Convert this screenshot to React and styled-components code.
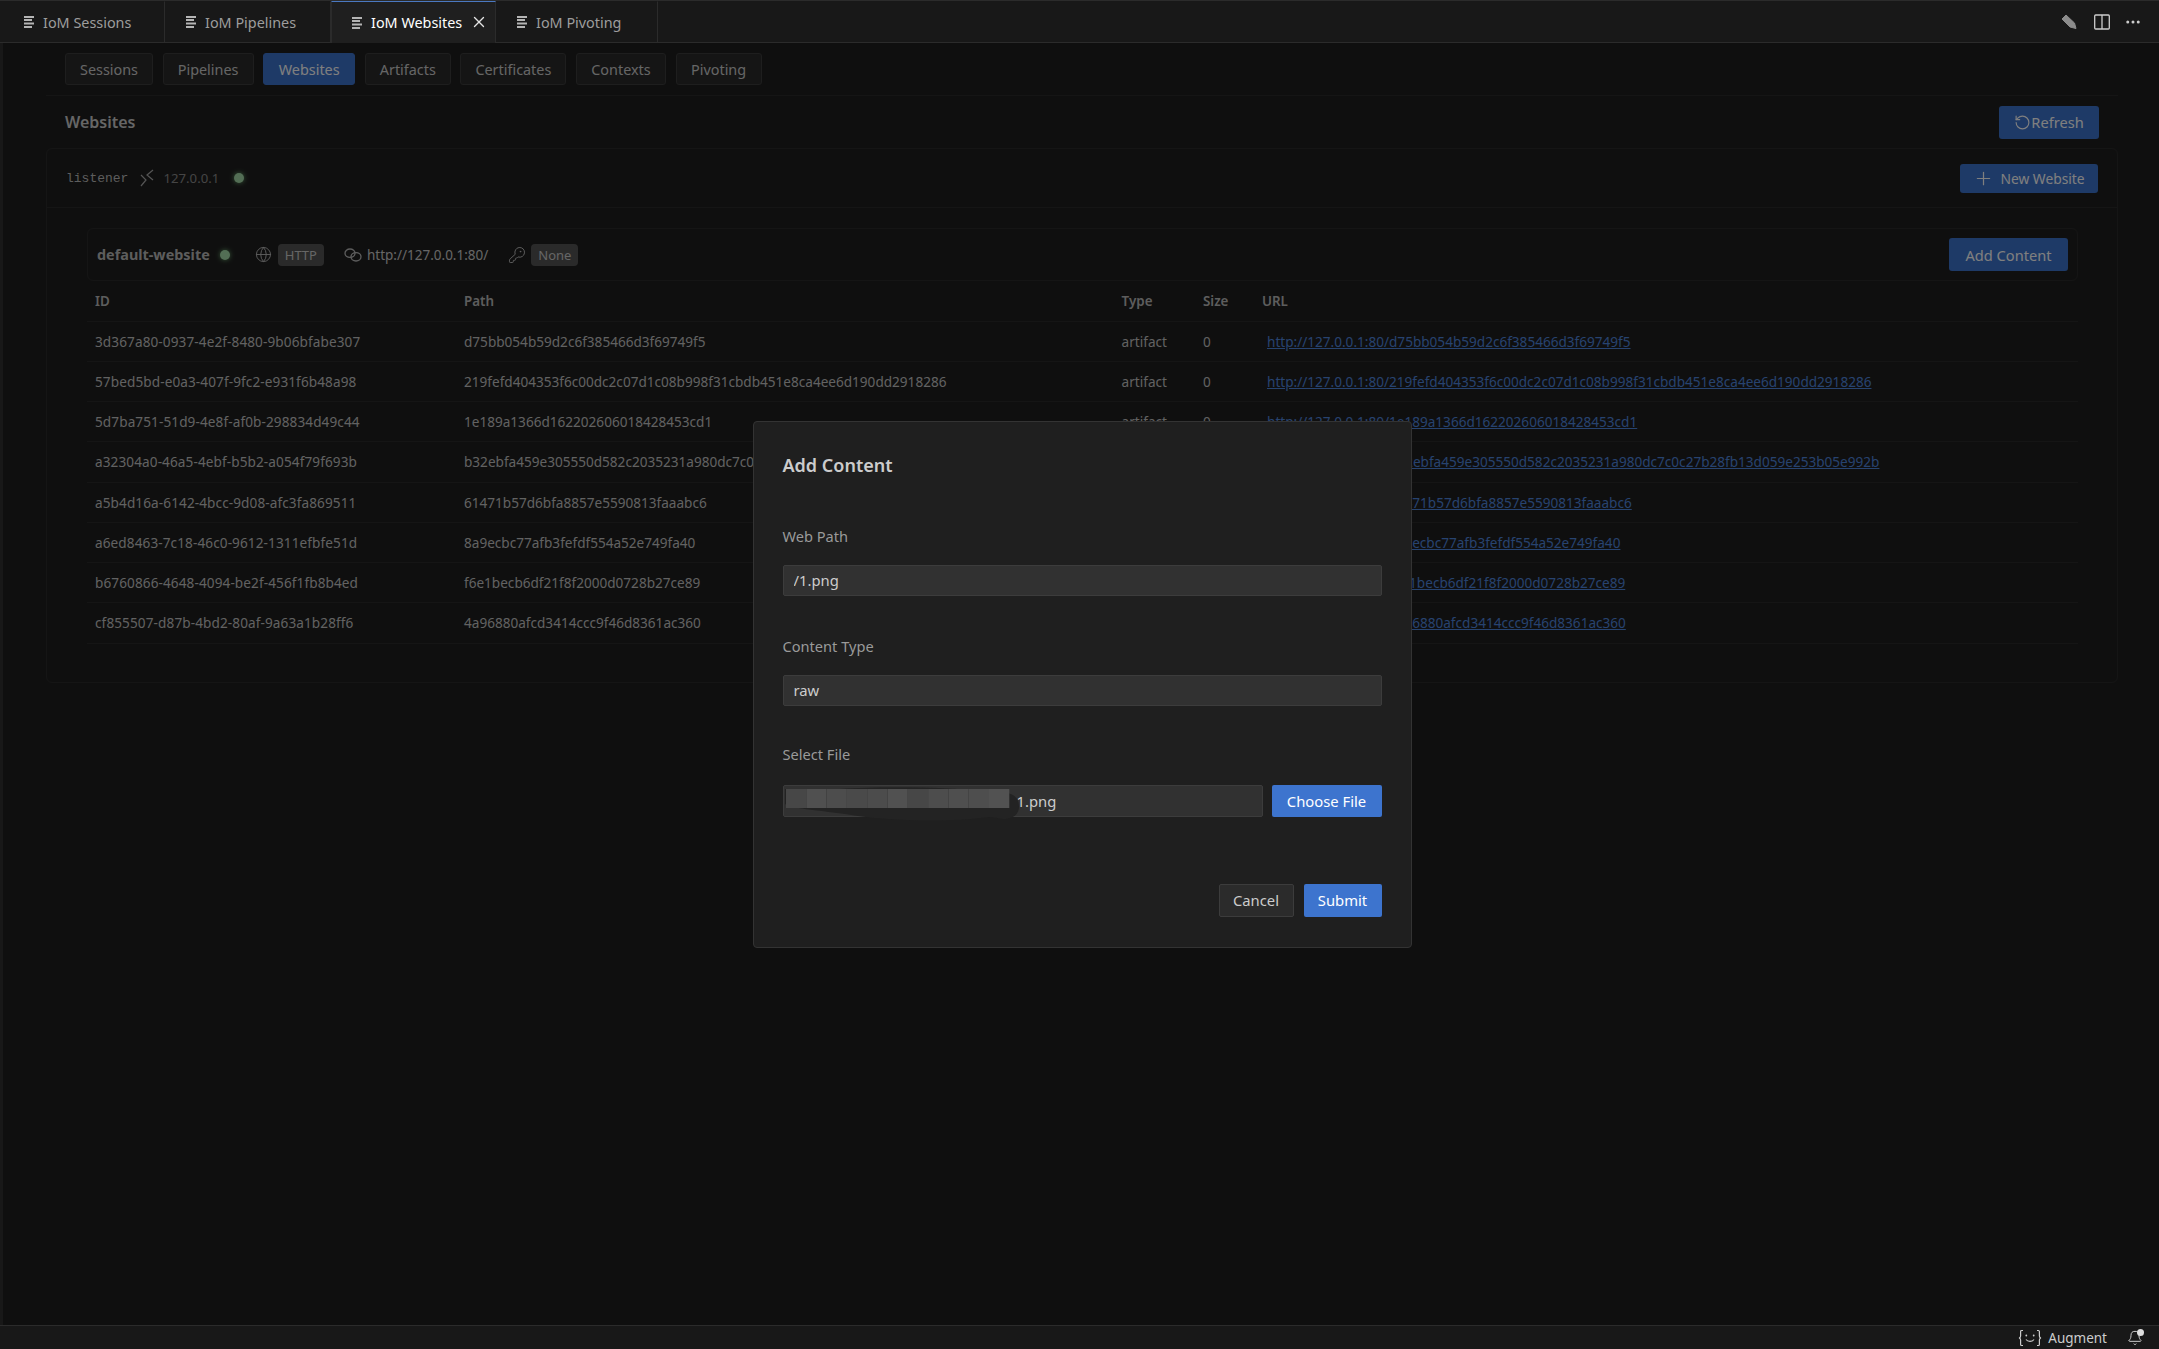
import React from "react";
import styled, { createGlobalStyle } from "styled-components";
import { Globe, KeyRound, Plus, RotateCcw, X, Bell, MoreHorizontal } from "lucide-react";

const FONT = `"Noto Sans", "Open Sans", sans-serif`;

const GlobalStyle = createGlobalStyle`
  html, body { margin: 0; height: 100%; background: #181818; }
  #root { height: 100%; }
  * { box-sizing: border-box; }
`;

const Shell = styled.div`
  height: 100vh;
  display: flex;
  flex-direction: column;
  font-family: ${FONT};
  font-size: 13.5px;
  color: #ccc;
  overflow: hidden;
`;

const TabBar = styled.div`
  height: 43px;
  flex: none;
  display: flex;
  padding-left: 3px;
  background: #181818;
  border-top: 1px solid #2b2b2b;
  border-bottom: 1px solid #2b2b2b;
`;

const Tab = styled.div`
  width: ${p => p.$width}px;
  display: flex;
  align-items: center;
  padding-left: 20px;
  gap: 8px;
  font-size: 14.4px;
  color: ${p => (p.$active ? "#fff" : "#9d9d9d")};
  background: ${p => (p.$active ? "#1f1f1f" : "#181818")};
  border-right: 1px solid #2b2b2b;
  border-left: 1px solid ${p => (p.$active ? "#2b2b2b" : "transparent")};
  border-top: 1px solid ${p => (p.$active ? "#4a78c0" : "transparent")};
  margin-bottom: ${p => (p.$active ? "-1px" : "0")};
  position: relative;
`;

const CloseIcon = styled(X)`
  position: absolute;
  right: 7px;
  top: 11px;
  color: #e4e4e4;
`;

const TabActions = styled.div`
  margin-left: auto;
  display: flex;
  align-items: center;
  gap: 14px;
  padding-right: 17px;
  color: #ccc;
`;

const Main = styled.div`
  flex: 1;
  position: relative;
  margin-left: 3px;
  background: #1f1f1f;
  min-height: 0;
`;

const Page = styled.div`
  padding: 10px 41px 0 43px;
`;

const SubTabs = styled.div`
  display: flex;
  gap: 9.6px;
  padding: 0 0 10px 19px;
  border-bottom: 1px solid #2b2b2b;
`;

const SubTab = styled.div`
  height: 32px;
  display: flex;
  align-items: center;
  padding: 0 14px;
  width: ${p => p.$width}px;
  justify-content: center;
  border-radius: 3px;
  font-size: 14.4px;
  color: ${p => (p.$active ? "#fff" : "#ccc")};
  background: ${p => (p.$active ? "#3d74ce" : "#2b2b2b")};
  border: 1px solid ${p => (p.$active ? "#3d74ce" : "#3c3c3c")};
`;

const SectionHead = styled.div`
  height: 52px;
  display: flex;
  align-items: center;
  justify-content: space-between;
  padding: 0 19px;
`;

const SectionTitle = styled.div`
  font-size: 16px;
  font-weight: 600;
  color: #ccc;
`;

const PrimaryButton = styled.div`
  display: flex;
  align-items: center;
  justify-content: center;
  gap: ${p => p.$gap || 0}px;
  width: ${p => p.$width}px;
  height: ${p => p.$height}px;
  border-radius: 3px;
  background: #3d74ce;
  color: #fff;
  font-size: ${p => p.$size || 14.6}px;
`;

const Card = styled.div`
  border: 1px solid #2b2b2b;
  border-radius: 6px;
  padding-bottom: 38px;
`;

const ListenerHead = styled.div`
  height: 59px;
  display: flex;
  align-items: center;
  padding: 0 19px;
  border-bottom: 1px solid #2b2b2b;
`;

const ListenerName = styled.span`
  font-family: "Liberation Mono", monospace;
  font-size: 13px;
  color: #bbb;
  margin-right: 12px;
`;

const Muted = styled.span`
  color: #8a8a8a;
  font-size: 13.2px;
  margin-left: 9px;
`;

const Dot = styled.span`
  width: 10px;
  height: 10px;
  border-radius: 50%;
  background: #a6dcaa;
  box-shadow: 0 0 5px #6fae74;
  margin-left: ${p => p.$left}px;
`;

const Right = styled.div`
  margin-left: auto;
`;

const CardBody = styled.div`
  padding: 20px 39px 0 40px;
`;

const WebsiteHead = styled.div`
  height: 53px;
  display: flex;
  align-items: center;
  padding: 0 9px;
  border: 1px solid #2b2b2b;
  border-radius: 6px;
  color: #ccc;
`;

const WebsiteName = styled.span`
  font-weight: 700;
  font-size: 14.4px;
  color: #bbb;
`;

const IconSlot = styled.span`
  display: inline-flex;
  margin-left: ${p => p.$left}px;
  margin-right: ${p => p.$right}px;
  color: #bbb;
`;

const Badge = styled.span`
  height: 22px;
  display: inline-flex;
  align-items: center;
  padding: 0 7px;
  border-radius: 4px;
  background: #555;
  color: #ccc;
  font-size: 13px;
`;

const Table = styled.table`
  width: 100%;
  table-layout: fixed;
  border-collapse: collapse;
`;

const Th = styled.th`
  width: ${p => (p.$width ? `${p.$width}px` : "auto")};
  height: 40px;
  padding: 1px 8px 0;
  text-align: left;
  font-size: 13.4px;
  font-weight: 600;
  color: #bbb;
  border-bottom: 1px solid #2b2b2b;
`;

const Td = styled.td`
  height: 40.25px;
  padding: 0 8px;
  font-size: 13.58px;
  color: #c4c4c4;
  white-space: nowrap;
  border-bottom: 1px solid #2b2b2b;
`;

const IdCell = styled(Td)`
  letter-spacing: 0.1px;
`;

const UrlLink = styled.a`
  color: #4f86de;
  text-decoration: underline;
  margin-left: 5px;
`;

const Overlay = styled.div`
  position: absolute;
  inset: 0;
  padding-left: 2px;
  background: rgba(0, 0, 0, 0.5);
  display: flex;
  align-items: center;
  justify-content: center;
`;

const Modal = styled.div`
  width: 659px;
  padding: 31px 29px 30px;
  background: #1f1f1f;
  border: 1px solid #333;
  border-radius: 4px;
  display: flex;
  flex-direction: column;
`;

const ModalTitle = styled.div`
  font-size: 18px;
  font-weight: 600;
  line-height: 24px;
  color: #ccc;
  margin-bottom: 49px;
`;

const Field = styled.div`
  margin-bottom: ${p => p.$bottom}px;
`;

const Label = styled.div`
  font-size: 14.6px;
  line-height: 20px;
  color: #9a9a9a;
  margin-bottom: ${p => p.$bottom || 19}px;
`;

const Input = styled.input`
  display: block;
  width: 100%;
  height: ${p => p.$height || 31}px;
  padding: 0 0 0 ${p => p.$pad || 10}px;
  background: #313131;
  border: 1px solid #3c3c3c;
  border-radius: 2px;
  color: #ccc;
  font-family: ${FONT};
  font-size: 14.8px;
  outline: none;
`;

const FileRow = styled.div`
  display: flex;
  gap: 9px;
`;

const FileField = styled.div`
  flex: 1;
  position: relative;
`;

const Redaction = styled.svg`
  position: absolute;
  left: 2px;
  top: 2px;
`;

const BlueButton = styled.div`
  width: ${p => p.$width}px;
  height: ${p => p.$height}px;
  flex: none;
  display: flex;
  align-items: center;
  justify-content: center;
  background: #3d74ce;
  border-radius: 2px;
  color: #fff;
  font-size: 14.8px;
`;

const GreyButton = styled(BlueButton)`
  background: #2b2b2b;
  border: 1px solid #3c3c3c;
  color: #ccc;
`;

const ModalFooter = styled.div`
  display: flex;
  justify-content: flex-end;
  gap: 10px;
`;

const StatusBar = styled.div`
  height: 24px;
  flex: none;
  display: flex;
  align-items: center;
  justify-content: flex-end;
  padding-right: 16px;
  background: #181818;
  border-top: 1px solid #2b2b2b;
  font-size: 13.5px;
  color: #ccc;
`;

const StatusLabel = styled.span`
  margin: 0 20px 0 5px;
`;

const FileTabIcon = () => (
  <svg width="11" height="12" viewBox="0 0 11 12" fill="#b4b4b4">
    <rect x="0" y="0" width="10" height="2" />
    <rect x="0" y="3" width="8" height="2" />
    <rect x="0" y="6.5" width="10" height="2" />
    <rect x="0" y="10" width="8" height="2" />
  </svg>
);

const PencilIcon = () => (
  <svg width="16" height="16" viewBox="0 0 16 16" fill="#8c8c8c" stroke="#8c8c8c" strokeLinejoin="round">
    <path d="M1 5L5 1l8.5 8 1.5 5.5L9 13z" />
  </svg>
);

const SplitIcon = () => (
  <svg width="16" height="16" viewBox="0 0 16 16" fill="none" stroke="#ccc" strokeWidth="1.3">
    <rect x="0.7" y="1" width="14.6" height="14" rx="1" />
    <path d="M8 1v14" />
  </svg>
);

const ListenerIcon = () => (
  <svg width="14" height="18" viewBox="0 0 14 18" fill="none" stroke="#aaa" strokeWidth="1.2">
    <path d="M1 6l5 5-5 6" />
    <path d="M13 1L7 6l6 5" />
  </svg>
);

const LinkRings = () => (
  <svg width="18" height="14" viewBox="0 0 18 14" fill="none" stroke="#bbb" strokeWidth="1.3">
    <ellipse cx="6" cy="5.2" rx="5" ry="4.2" />
    <ellipse cx="12" cy="8.8" rx="5" ry="4.2" />
  </svg>
);

const AugmentLogo = () => (
  <svg width="26" height="18" viewBox="0 0 24 18" fill="none" stroke="#ccc" strokeWidth="1.2">
    <path d="M5 1.5H3.6a1 1 0 0 0-1 1V7a2 2 0 0 1-1.6 2 2 2 0 0 1 1.6 2v4.5a1 1 0 0 0 1 1H5" />
    <path d="M19 1.5h1.4a1 1 0 0 1 1 1V7a2 2 0 0 0 1.6 2 2 2 0 0 0-1.6 2v4.5a1 1 0 0 1-1 1H19" />
    <path d="M8 10.5c1.8 2.4 6.2 2.4 8 0" />
    <circle cx="8.3" cy="6.5" r="0.9" fill="#ccc" stroke="none" />
    <circle cx="15.7" cy="6.5" r="0.9" fill="#ccc" stroke="none" />
  </svg>
);

const BellDot = styled.span`
  position: relative;
  display: inline-flex;
  &::after {
    content: "";
    position: absolute;
    right: -1px;
    top: -1px;
    width: 7px;
    height: 7px;
    border-radius: 50%;
    background: #ddd;
  }
`;

const TABS = [
  { name: "IoM Sessions", width: 162 },
  { name: "IoM Pipelines", width: 166 },
  { name: "IoM Websites", width: 165, active: true },
  { name: "IoM Pivoting", width: 162 },
];

const SUB_TABS = [
  { name: "Sessions", width: 88 },
  { name: "Pipelines", width: 91 },
  { name: "Websites", width: 92, active: true },
  { name: "Artifacts", width: 86 },
  { name: "Certificates", width: 106 },
  { name: "Contexts", width: 90 },
  { name: "Pivoting", width: 86 },
];

const ROWS = [
  ["3d367a80-0937-4e2f-8480-9b06bfabe307", "d75bb054b59d2c6f385466d3f69749f5"],
  ["57bed5bd-e0a3-407f-9fc2-e931f6b48a98", "219fefd404353f6c00dc2c07d1c08b998f31cbdb451e8ca4ee6d190dd2918286"],
  ["5d7ba751-51d9-4e8f-af0b-298834d49c44", "1e189a1366d162202606018428453cd1"],
  ["a32304a0-46a5-4ebf-b5b2-a054f79f693b", "b32ebfa459e305550d582c2035231a980dc7c0c27b28fb13d059e253b05e992b"],
  ["a5b4d16a-6142-4bcc-9d08-afc3fa869511", "61471b57d6bfa8857e5590813faaabc6"],
  ["a6ed8463-7c18-46c0-9612-1311efbfe51d", "8a9ecbc77afb3fefdf554a52e749fa40"],
  ["b6760866-4648-4094-be2f-456f1fb8b4ed", "f6e1becb6df21f8f2000d0728b27ce89"],
  ["cf855507-d87b-4bd2-80af-9a63a1b28ff6", "4a96880afcd3414ccc9f46d8361ac360"],
];

const MOSAIC = ["#474747", "#505050", "#4d4d4d", "#4a4a4a", "#4c4c4c", "#515151", "#474747", "#4d4d4d", "#4f4f4f", "#4e4e4e", "#525252"];

export default function App() {
  return (
    <Shell>
      <GlobalStyle />
      <TabBar>
        {TABS.map(tab => (
          <Tab key={tab.name} $width={tab.width} $active={tab.active}>
            <FileTabIcon />
            {tab.name}
            {tab.active && <CloseIcon size={18} strokeWidth={1.8} />}
          </Tab>
        ))}
        <TabActions>
          <IconSlot $left={0} $right={3}><PencilIcon /></IconSlot>
          <SplitIcon />
          <MoreHorizontal size={18} />
        </TabActions>
      </TabBar>

      <Main>
        <Page>
          <SubTabs>
            {SUB_TABS.map(tab => (
              <SubTab key={tab.name} $width={tab.width} $active={tab.active}>
                {tab.name}
              </SubTab>
            ))}
          </SubTabs>
          <SectionHead>
            <SectionTitle>Websites</SectionTitle>
            <PrimaryButton $width={100} $height={33}>
              <RotateCcw size={17} strokeWidth={1.6} />
              Refresh
            </PrimaryButton>
          </SectionHead>
          <Card>
            <ListenerHead>
              <ListenerName>listener</ListenerName>
              <ListenerIcon />
              <Muted>127.0.0.1</Muted>
              <Dot $left={15} />
              <Right>
                <PrimaryButton $width={138} $height={29} $gap={6} $size={13.8}>
                  <Plus size={21} strokeWidth={1.4} />
                  New Website
                </PrimaryButton>
              </Right>
            </ListenerHead>
            <CardBody>
              <WebsiteHead>
                <WebsiteName>default-website</WebsiteName>
                <Dot $left={10} />
                <IconSlot $left={25} $right={6}><Globe size={17} strokeWidth={1.3} /></IconSlot>
                <Badge>HTTP</Badge>
                <IconSlot $left={20} $right={5}><LinkRings /></IconSlot>
                <span>http://127.0.0.1:80/</span>
                <IconSlot $left={20} $right={5}><KeyRound size={18} strokeWidth={1.3} /></IconSlot>
                <Badge>None</Badge>
                <Right>
                  <PrimaryButton $width={119} $height={33}>Add Content</PrimaryButton>
                </Right>
              </WebsiteHead>
              <Table>
                <thead>
                  <tr>
                    <Th $width={369}>ID</Th>
                    <Th $width={657.6}>Path</Th>
                    <Th $width={81.4}>Type</Th>
                    <Th $width={59}>Size</Th>
                    <Th>URL</Th>
                  </tr>
                </thead>
                <tbody>
                  {ROWS.map(([id, path]) => (
                    <tr key={id}>
                      <IdCell>{id}</IdCell>
                      <Td>{path}</Td>
                      <Td>artifact</Td>
                      <Td>0</Td>
                      <Td>
                        <UrlLink href="#">{`http://127.0.0.1:80/${path}`}</UrlLink>
                      </Td>
                    </tr>
                  ))}
                </tbody>
              </Table>
            </CardBody>
          </Card>
        </Page>

        <Overlay>
          <Modal>
            <ModalTitle>Add Content</ModalTitle>
            <Field $bottom={40}>
              <Label>Web Path</Label>
              <Input readOnly value="/1.png" />
            </Field>
            <Field $bottom={38}>
              <Label $bottom={19}>Content Type</Label>
              <Input readOnly value="raw" />
            </Field>
            <Field $bottom={67}>
              <Label $bottom={21}>Select File</Label>
              <FileRow>
                <FileField>
                  <Input readOnly value="1.png" $height={32} $pad={233} />
                  <Redaction width="236" height="36" viewBox="0 0 236 36">
                    <path d="M0 2H55C100-1 170 0 222 6C232 8 234 14 234 20C234 30 222 34 212 31L205 30C160 36 100 34 60 27C40 24 8 22 0 17Z" fill="#232323" />
                    {MOSAIC.map((color, i) => (
                      <rect key={i} x={1 + i * 20.3} y="2" width="20.3" height="19" fill={color} />
                    ))}
                  </Redaction>
                </FileField>
                <BlueButton $width={110} $height={32}>Choose File</BlueButton>
              </FileRow>
            </Field>
            <ModalFooter>
              <GreyButton $width={75} $height={33}>Cancel</GreyButton>
              <BlueButton $width={78} $height={33}>Submit</BlueButton>
            </ModalFooter>
          </Modal>
        </Overlay>
      </Main>

      <StatusBar>
        <AugmentLogo />
        <StatusLabel>Augment</StatusLabel>
        <BellDot><Bell size={16} strokeWidth={1.5} /></BellDot>
      </StatusBar>
    </Shell>
  );
}
